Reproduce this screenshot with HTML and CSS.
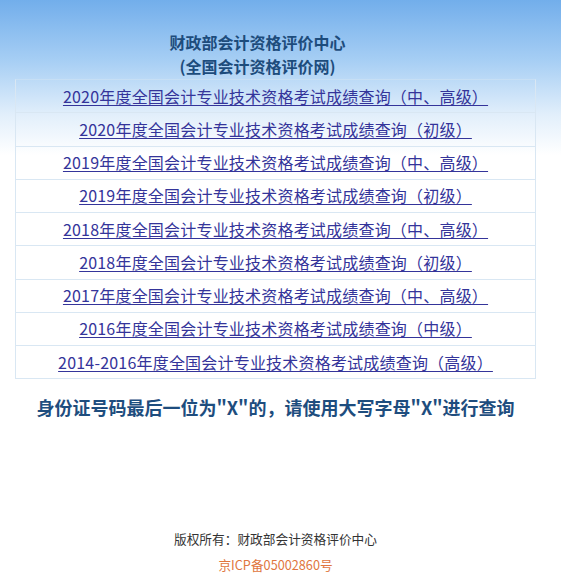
FILE: index.html
```html
<!DOCTYPE html>
<html lang="zh-CN">
<head>
<meta charset="utf-8">
<title>财政部会计资格评价中心</title>
<link rel="stylesheet" href="styles.css">
</head>
<body>
<div class="page">
  <div class="title">
    <div>财政部会计资格评价中心</div>
    <div>(全国会计资格评价网)</div>
  </div>
  <ul class="links">
    <li><a href="#">2020年度全国会计专业技术资格考试成绩查询（中、高级）</a></li>
    <li><a href="#">2020年度全国会计专业技术资格考试成绩查询（初级）</a></li>
    <li><a href="#">2019年度全国会计专业技术资格考试成绩查询（中、高级）</a></li>
    <li><a href="#">2019年度全国会计专业技术资格考试成绩查询（初级）</a></li>
    <li><a href="#">2018年度全国会计专业技术资格考试成绩查询（中、高级）</a></li>
    <li><a href="#">2018年度全国会计专业技术资格考试成绩查询（初级）</a></li>
    <li><a href="#">2017年度全国会计专业技术资格考试成绩查询（中、高级）</a></li>
    <li><a href="#">2016年度全国会计专业技术资格考试成绩查询（中级）</a></li>
    <li><a href="#">2014-2016年度全国会计专业技术资格考试成绩查询（高级）</a></li>
  </ul>
  <div class="notice">身份证号码最后一位为"X"的，请使用大写字母"X"进行查询</div>
  <div class="footer">
    <div class="copy">版权所有：财政部会计资格评价中心</div>
    <div class="icp">京ICP备05002860号</div>
  </div>
</div>
</body>
</html>
```
FILE: styles.css
```css
html, body {
  margin: 0;
  padding: 0;
}
body {
  background: linear-gradient(to bottom, #72aeeb 0px, #a6cef4 60px, #e2effb 115px, #ffffff 155px);
  background-repeat: no-repeat;
  background-color: #fff;
  min-height: 585px;
  font-family: "Noto Sans CJK SC", "Noto Sans", sans-serif;
}
.page {
  width: 521px;
  margin-left: 15px;
  padding-top: 30px;
}
.title {
  text-align: center;
  font-size: 16px;
  font-weight: bold;
  line-height: 24px;
  color: #1d4c7c;
  padding-right: 36px;
  margin-right: -36px;
  margin-left: -36px;
}
.links {
  list-style: none;
  margin: 1px 0 0 0;
  padding: 0;
  border: 1px solid #d9e7f3;
  border-top-color: rgba(217, 231, 243, 0.4);
}
.links li {
  box-sizing: border-box;
  height: 33.25px;
  border-top: 1px solid #d9e7f3;
  text-align: center;
  display: flex;
  align-items: center;
  justify-content: center;
  padding-bottom: 1px;
}
.links li:first-child {
  border-top: none;
  height: 32.25px;
}
.links a {
  color: #34349a;
  font-size: 16px;
  line-height: 20px;
  letter-spacing: 0.2px;
  text-decoration: underline;
  text-underline-offset: 2px;
}
.notice {
  margin-top: 16px;
  text-align: center;
  font-size: 18px;
  font-weight: bold;
  line-height: 24px;
  color: #1e4d7e;
}
.footer {
  margin-top: 107px;
  text-align: center;
  line-height: 26px;
}
.copy {
  font-size: 12.7px;
  color: #333;
}
.icp {
  font-size: 12.7px;
  color: #e0763e;
}
```
